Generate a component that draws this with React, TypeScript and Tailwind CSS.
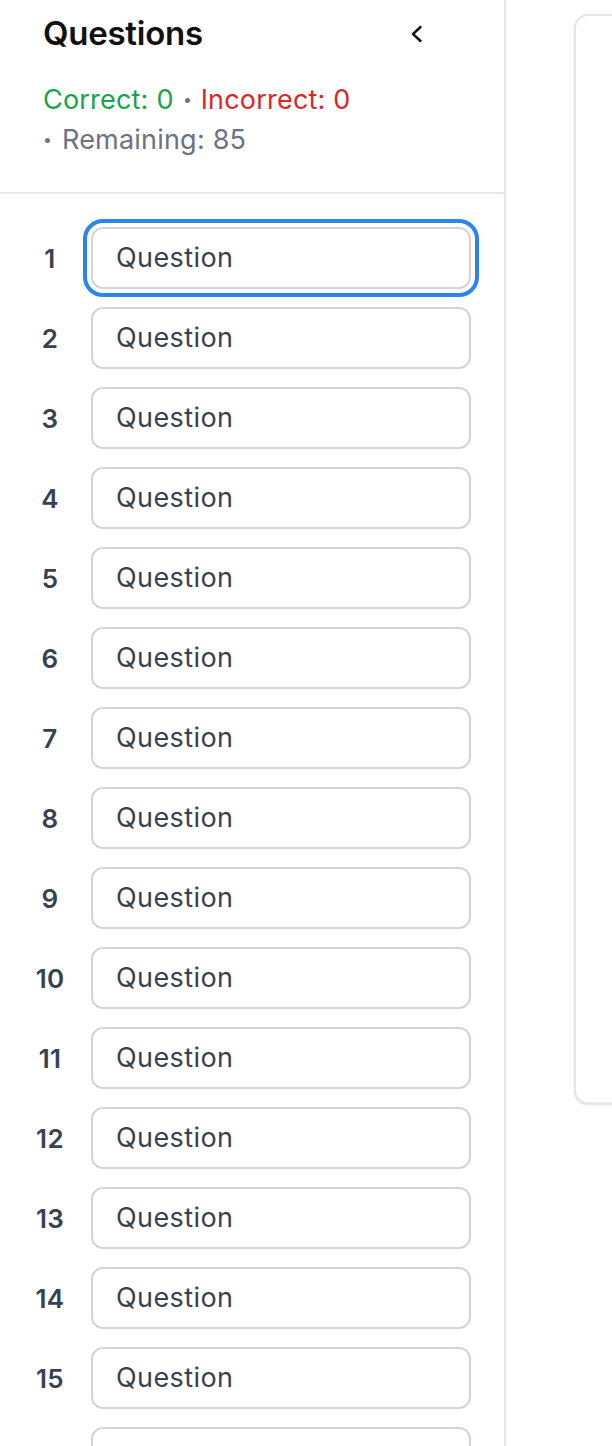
import React from "react";

function Dot({ className }: { className: string }) {
  return <span className={"inline-block h-[5px] w-[5px] rounded-full bg-[#6b7280] align-middle " + className} />;
}

export default function App() {
  const items = Array.from({ length: 16 }, (_, i) => i + 1);
  return (
    <div
      className="flex h-[1446px] w-[612px] overflow-hidden bg-white"
      style={{ fontFamily: "Inter, 'Noto Sans', sans-serif" }}
    >
      <aside className="flex w-[506px] shrink-0 flex-col border-r-2 border-[#e5e7eb]">
        <div className="border-b-2 border-[#e5e7eb] pb-[32px] pl-[43px] pr-[80px] pt-[13px]">
          <div className="flex h-[40px] items-center justify-between">
            <h1 className="text-[33px] font-semibold leading-[40px] tracking-[-0.25px] text-[#111111]">
              Questions
            </h1>
            <svg width="16" height="18" viewBox="0 0 16 18" fill="none" className="mt-[2px]">
              <path d="M12.5 2 L5 9 L12.5 16" stroke="#111" strokeWidth="2.4" strokeLinecap="round" strokeLinejoin="round" />
            </svg>
          </div>
          <div className="mt-[27px] text-[27px] leading-[40px] tracking-[0.2px]">
            <div>
              <span className="text-[#16a34a]">Correct: 0</span>
              <Dot className="mx-[11px] mb-[2px]" />
              <span className="text-[#dc2626]">Incorrect: 0</span>
            </div>
            <div>
              <Dot className="ml-[2px] mr-[12px] mb-[2px]" />
              <span className="text-[#6b7280]">Remaining: 85</span>
            </div>
          </div>
        </div>
        <div className="flex flex-col gap-[18px] pl-[30px] pt-[33px]">
          {items.map((n) => (
            <div key={n} className="flex items-center gap-[21px]">
              <div className="w-[40px] text-center text-[26px] font-semibold tracking-[0.3px] text-[#374151]">{n}</div>
              <div
                className={
                  "flex h-[62px] w-[380px] shrink-0 items-center rounded-[12px] border-2 border-[#d1d5db] bg-white pl-[23px] text-[27px] tracking-[0.4px] text-[#374151] " +
                  (n === 1 ? "outline-[4px] outline-offset-[4px] outline-[#2b86e6] [outline-style:solid]" : "")
                }
              >
                Question
              </div>
            </div>
          ))}
        </div>
      </aside>
      <main className="flex-1 pl-[68px] pt-[14px]">
        <div className="h-[1090px] w-[200px] rounded-[14px] border-2 border-[#e5e7eb] bg-white shadow-sm" />
      </main>
    </div>
  );
}
